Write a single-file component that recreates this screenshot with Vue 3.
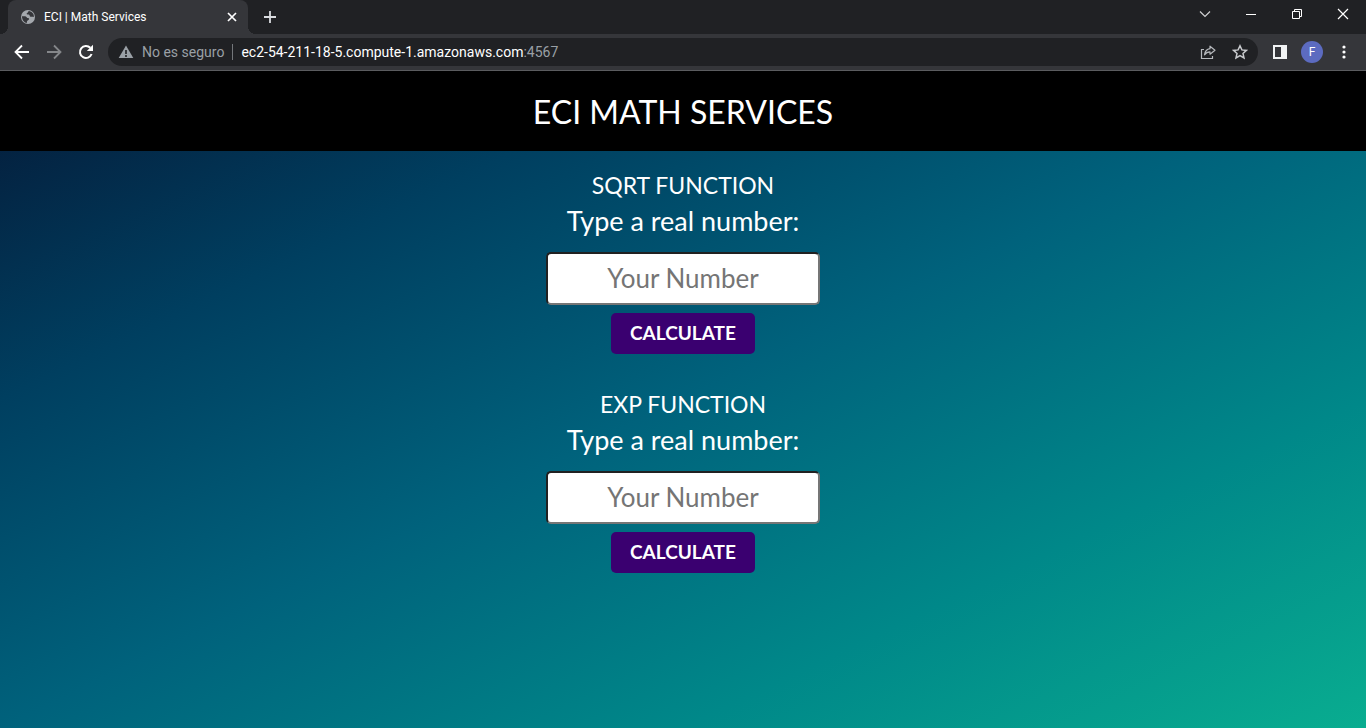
<script setup>
const forms = [
  { id: 'sqrt', title: 'SQRT FUNCTION' },
  { id: 'exp', title: 'EXP FUNCTION' },
]
</script>

<template>
  <div class="window">
    <div class="chrome">
      <div class="tabs">
        <div class="tab">
          <svg class="globe" viewBox="0 0 16 16" width="16" height="16">
            <circle cx="8" cy="8" r="7" fill="#a4a8ad" />
            <path d="M2 7.200c1.500.2 2.500-.3 3.800.2 1.200.5.9 1.600 2.200 1.700 1 .1 1.400.7.9 1.500-.6 1-1.700.9-1.900 2l-.2 1.300C3.900 13.400 1.900 10.500 2 7.200zM8.800 2.100c-.8.5-.4 1.200-1.300 1.700-.8.500-1.200 1-.5 1.500.9.600 1.700-.2 2.400.8.500.8.200 1.500 1.200 1.700 1 .3 1.400-.5 3.300.3.300-3-2-5.700-5.100-6z" fill="#35363a" />
          </svg>
          <span class="tab-title">ECI | Math Services</span>
          <button class="icon" aria-label="Cerrar pestaña">
            <svg viewBox="0 0 16 16" width="16" height="16"><path d="M4 4l8 8M12 4l-8 8" stroke="#fff" stroke-width="1.700" /></svg>
          </button>
        </div>
        <button class="icon plus" aria-label="Nueva pestaña">
          <svg viewBox="0 0 16 16" width="16" height="16"><path d="M8 2v12M2 8h12" stroke="#dadce0" stroke-width="1.800" /></svg>
        </button>
        <div class="controls">
          <button class="icon" aria-label="Buscar pestañas"><svg viewBox="0 0 16 16" width="16" height="16"><path d="M3 5.500l5 5 5-5" fill="none" stroke="#d0d0d2" stroke-width="1.200" /></svg></button>
          <button class="icon" aria-label="Minimizar"><svg viewBox="0 0 16 16" width="16" height="16"><path d="M3 8.500h10" stroke="#fff" /></svg></button>
          <button class="icon" aria-label="Restaurar"><svg viewBox="0 0 16 16" width="16" height="16"><path d="M3.500 5.500h7v7h-7zM5.500 5.500v-2h7v7h-2" fill="none" stroke="#fff" /></svg></button>
          <button class="icon" aria-label="Cerrar"><svg viewBox="0 0 16 16" width="16" height="16"><path d="M3 3l10 10M13 3L3 13" stroke="#fff" stroke-width="1.200" /></svg></button>
        </div>
      </div>
      <div class="toolbar">
        <button class="icon" aria-label="Atrás"><svg viewBox="0 0 16 16" width="16" height="16"><path d="M15 8H2M8 1.500L1.500 8 8 14.500" fill="none" stroke="#fff" stroke-width="1.800" /></svg></button>
        <button class="icon" aria-label="Adelante"><svg viewBox="0 0 16 16" width="16" height="16"><path d="M1 8h13M8 1.500L14.500 8 8 14.500" fill="none" stroke="#85878a" stroke-width="1.800" /></svg></button>
        <button class="icon" aria-label="Recargar"><svg viewBox="0 0 16 16" width="16" height="16"><path d="M13.600 10A6 6 0 1 1 12.300 3.800" fill="none" stroke="#fff" stroke-width="2" /><path d="M15 .8V7H8.800z" fill="#fff" /></svg></button>
        <div class="address">
          <svg viewBox="0 0 16 16" width="16" height="16"><path d="M8 1.500L15.300 14H.7z" fill="#9aa0a6" /><path d="M8 6v4M8 11v2" stroke="#202124" stroke-width="1.600" /></svg>
          <span class="unsafe">No es seguro</span>
          <span class="url">ec2-54-211-18-5.compute-1.amazonaws.com<span class="port">:4567</span></span>
          <button class="icon" aria-label="Compartir"><svg viewBox="0 0 16 16" width="16" height="16"><path d="M4 5.500H1.500v9h11V12" fill="none" stroke="#b6b9bd" stroke-width="1.200" /><path d="M10 2.200l5 4-5 4V7.900c-2.500 0-4 .8-5.500 2.900.5-3.300 2.300-5.600 5.500-6.100z" fill="none" stroke="#b6b9bd" stroke-width="1.200" stroke-linejoin="round" /></svg></button>
          <button class="icon" aria-label="Agregar a favoritos"><svg viewBox="0 0 16 16" width="16" height="16"><path d="M8 1.800l1.900 4.100 4.500.5-3.400 3 1 4.500L8 11.600l-4 2.300 1-4.500-3.400-3 4.500-.5z" fill="none" stroke="#c8cacd" stroke-width="1.500" /></svg></button>
        </div>
        <button class="icon panel" aria-label="Panel lateral"><svg viewBox="0 0 16 16" width="16" height="16"><path fill-rule="evenodd" d="M1 1h14v14H1zM3 3v10h6V3z" fill="#f1f3f4" /></svg></button>
        <button class="avatar" aria-label="Perfil">F</button>
        <button class="icon" aria-label="Menú"><svg viewBox="0 0 16 16" width="16" height="16" fill="#fff"><circle cx="8" cy="3" r="1.600" /><circle cx="8" cy="8" r="1.600" /><circle cx="8" cy="13" r="1.600" /></svg></button>
      </div>
    </div>
    <div class="page">
      <header><h1>ECI MATH SERVICES</h1></header>
      <main>
        <form v-for="f in forms" :key="f.id" @submit.prevent>
          <h2>{{ f.title }}</h2>
          <label :for="f.id">Type a real number:</label>
          <input :id="f.id" type="text" placeholder="Your Number" />
          <button class="calc">CALCULATE</button>
        </form>
      </main>
    </div>
  </div>
</template>

<style>
body {
  margin: 0;
}
</style>

<style scoped>
* {
  box-sizing: border-box;
}
.window {
  min-height: 100vh;
  display: flex;
  flex-direction: column;
  font-family: "Century Gothic", Lato, sans-serif;
  color: #fff;
}
.chrome {
  font-family: "Segoe UI", Roboto, sans-serif;
  background: #35363a;
  border-bottom: 1px solid #5b5c5f;
}
.tabs {
  display: flex;
  align-items: center;
  height: 34px;
  padding-left: 8px;
  background: #202124;
}
.tab {
  position: relative;
  display: flex;
  align-items: center;
  width: 240px;
  height: 34px;
  padding: 0 8px 0 12px;
  background: #35363a;
  border-radius: 8px 8px 0 0;
}
.tab::before,
.tab::after {
  content: "";
  position: absolute;
  bottom: 0;
  width: 8px;
  height: 8px;
}
.tab::before {
  right: 100%;
  background: radial-gradient(circle at 0 0, transparent 8px, #35363a 8px);
}
.tab::after {
  left: 100%;
  background: radial-gradient(circle at 100% 0, transparent 8px, #35363a 8px);
}
.tab-title {
  flex: 1;
  margin-left: 8px;
  font-size: 12px;
}
.icon {
  display: flex;
  flex: none;
  padding: 0;
  border: 0;
  background: none;
}
svg {
  display: block;
  flex: none;
}
.plus {
  margin-left: 14px;
}
.controls {
  display: flex;
  gap: 30px;
  margin: 0 15px 6px auto;
}
.toolbar {
  display: flex;
  align-items: center;
  gap: 16px;
  height: 36px;
  padding: 0 14px;
}
.address {
  display: flex;
  flex: 1;
  align-items: center;
  gap: 16px;
  height: 28px;
  margin-left: -2px;
  padding: 0 10px;
  border-radius: 14px;
  background: #202124;
  font-size: 14px;
}
.unsafe {
  margin-left: -8px;
  padding-right: 8px;
  border-right: 1px solid #74777b;
  line-height: 16px;
  color: #9aa0a6;
}
.url {
  flex: 1;
  margin-left: -8px;
}
.port {
  color: #9aa0a6;
}
.panel {
  margin-left: -2px;
}
.avatar {
  width: 22px;
  height: 22px;
  margin: 0 -3px;
  padding: 0;
  border: 0;
  border-radius: 50%;
  background: #5c6bc0;
  color: #fff;
  font: 12px Roboto, sans-serif;
}
.page {
  flex: 1;
  background: linear-gradient(to right bottom, #051937, #003f60, #00627c, #008889, #09ad90);
}
header {
  display: flex;
  align-items: center;
  justify-content: center;
  height: 80px;
  background: #000;
}
h1,
h2 {
  margin: 0;
  font-weight: 400;
}
h1 {
  font-size: 32px;
}
main {
  display: flex;
  flex-direction: column;
  gap: 32px;
  padding: 16px;
}
form {
  display: flex;
  flex-direction: column;
  align-items: center;
}
h2,
label {
  line-height: 36px;
}
h2 {
  font-size: 23px;
}
label {
  font-size: 27px;
}
input {
  width: 274px;
  height: 53px;
  margin: 13px 0 8px;
  padding: 0 2px 2px;
  border: 2px inset #767676;
  border-radius: 5px;
  background: #fff;
  font-family: inherit;
  font-size: 26px;
  text-align: center;
}
input::placeholder {
  color: #757575;
}
.calc {
  width: 144px;
  height: 41px;
  padding: 0 0 2px;
  border: 0;
  border-radius: 5px;
  background: #3a0070;
  color: #fff;
  font-family: inherit;
  font-size: 19px;
  font-weight: 700;
}
</style>
